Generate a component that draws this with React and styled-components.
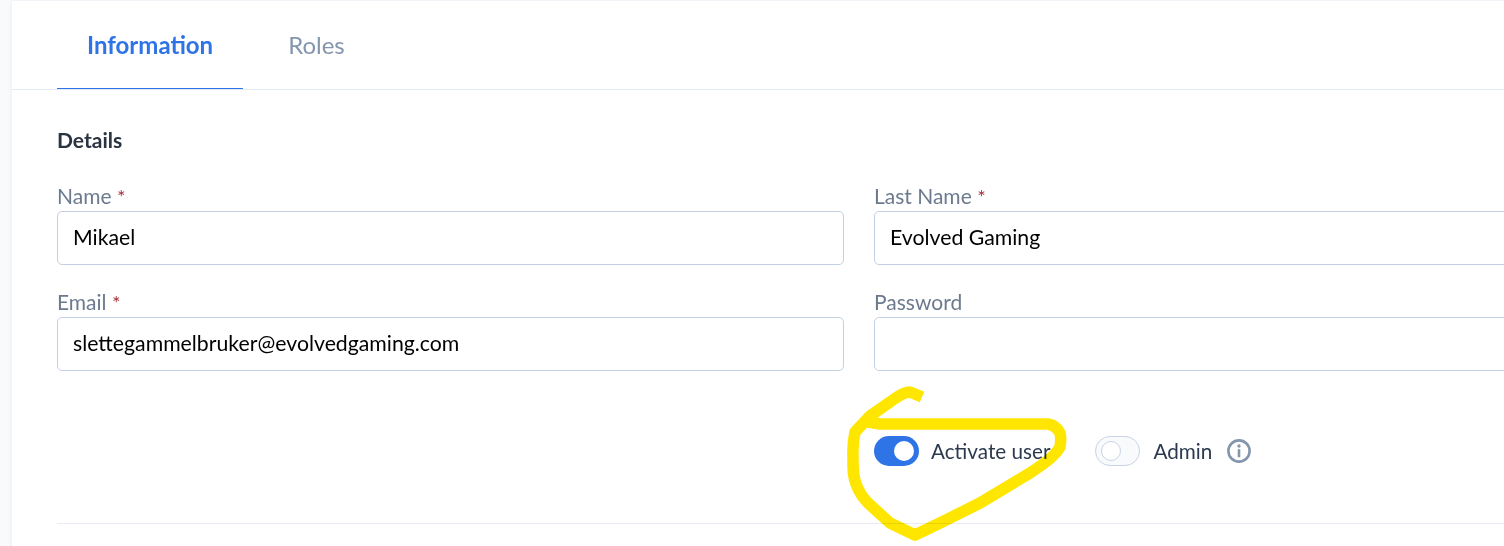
import React from 'react';
import styled, {createGlobalStyle} from 'styled-components';

const Global = createGlobalStyle`
html, body {
    margin: 0;
    padding: 0;
    height: 546px;
    overflow: hidden;
    background: #f8fafc;
}
* {
    box-sizing: border-box;
}
`

const Page = styled.div`
width: 1504px;
height: 546px;
padding: 1px 0 0 12px;
overflow: hidden;
position: relative;
font-family: 'Lato', 'Liberation Sans', sans-serif;
`

const Card = styled.div`
width: 1700px;
height: 700px;
background: #fff;
box-shadow: 0 0 4px rgba(180, 190, 210, 0.25);
`

const Tabs = styled.div`
display: flex;
gap: 15px;
height: 89px;
padding: 0 45px;
border-bottom: 1px solid #e4eaf3;
`

const Tab = styled.div`
display: flex;
align-items: center;
height: 88px;
padding: 0 30px 1px;
font-size: 24px;
font-weight: ${p => p.$active ? 700 : 400};
color: ${p => p.$active ? '#2f74e6' : '#8496ad'};
border-bottom: ${p => p.$active ? '1px solid #2f74e6' : 'none'};
`

const Body = styled.div`
padding: 38px 45px 0;
`

const Title = styled.h3`
margin: 0 0 31px;
font-size: 21px;
line-height: 24px;
font-weight: 700;
color: #2a3342;
`

const Grid = styled.div`
display: grid;
grid-template-columns: 787px 787px;
column-gap: 30px;
row-gap: 24px;
`

const Field = styled.div`
display: flex;
flex-direction: column;
`

const Label = styled.label`
font-size: 21px;
line-height: 26px;
margin-bottom: 4px;
height: 24px;
color: #6b7a8d;
`

const Req = styled.span`
color: #a8323e;
font-size: 20px;
`

const Input = styled.div`
height: 54px;
padding: 0 15px 3px;
display: flex;
align-items: center;
border: 1px solid #c3cfe3;
border-radius: 5px;
font-size: 21.25px;
color: #000;
`

const Options = styled.div`
display: flex;
align-items: center;
height: 32px;
margin: 64px 0 56px 817px;
`

const Track = styled.div`
width: 45px;
height: 30px;
border-radius: 15px;
position: relative;
background: ${p => p.$on ? '#2f74e6' : '#f8fafc'};
border: ${p => p.$on ? 'none' : '1px solid #c9d4e6'};
`

const Knob = styled.div`
position: absolute;
top: ${p => p.$on ? '5px' : '4px'};
left: ${p => p.$on ? '20px' : '5px'};
width: 20px;
height: 20px;
border-radius: 50%;
background: #fff;
border: ${p => p.$on ? 'none' : '1px solid #c9d4e6'};
`

const OptionLabel = styled.span`
margin: 0 ${p => p.$after}px 0 ${p => p.$before}px;
font-size: 20.7px;
color: #2c3a4f;
`

const Divider = styled.div`
height: 1px;
background: #e8ebf4;
margin-right: -45px;
`

const Scribble = styled.svg`
position: absolute;
left: 0;
top: 0;
pointer-events: none;
mix-blend-mode: multiply;
`

const InfoIcon = () => (
    <svg width="24" height="24" viewBox="0 0 24 24" fill="none">
        <circle cx="12" cy="12" r="10.6" stroke="#8496ad" strokeWidth="2.6"/>
        <circle cx="12" cy="7" r="1.7" fill="#8496ad"/>
        <rect x="10.7" y="10.2" width="2.6" height="8" fill="#8496ad"/>
    </svg>
)

export default function App() {
    return (
        <Page>
            <Global/>
            <Card>
                <Tabs>
                    <Tab $active>Information</Tab>
                    <Tab>Roles</Tab>
                </Tabs>
                <Body>
                    <Title>Details</Title>
                    <Grid>
                        <Field>
                            <Label>Name <Req>*</Req></Label>
                            <Input>Mikael</Input>
                        </Field>
                        <Field>
                            <Label>Last Name <Req>*</Req></Label>
                            <Input>Evolved Gaming</Input>
                        </Field>
                        <Field>
                            <Label>Email <Req>*</Req></Label>
                            <Input>slettegammelbruker@evolvedgaming.com</Input>
                        </Field>
                        <Field>
                            <Label>Password</Label>
                            <Input/>
                        </Field>
                    </Grid>
                    <Options>
                        <Track $on><Knob $on/></Track>
                        <OptionLabel $before={12} $after={45}>Activate user</OptionLabel>
                        <Track><Knob/></Track>
                        <OptionLabel $before={13} $after={15}>Admin</OptionLabel>
                        <InfoIcon/>
                    </Options>
                    <Divider/>
                </Body>
            </Card>
            <Scribble width="1504" height="546" viewBox="0 0 1504 546" fill="none">
                <path
                    d="M922 397 L910 392 C900 393 895 399 890 402 L870 416 L855 432 C852 445 853 452 853 460 C853 470 853 476 856 484 C859 492 863 498 868 503 L890 523 L915 535 L940 523 L980 503 L1030 473 C1045 463 1055 456 1060 447 C1061 441 1061 437 1060 433 C1057 427 1053 425 1048 424 L963 424 L880 424 L868 422"
                    stroke="#ffe600"
                    strokeWidth="11.5"
                    strokeLinejoin="round"
                    strokeLinecap="butt"
                />
            </Scribble>
        </Page>
    )
}
